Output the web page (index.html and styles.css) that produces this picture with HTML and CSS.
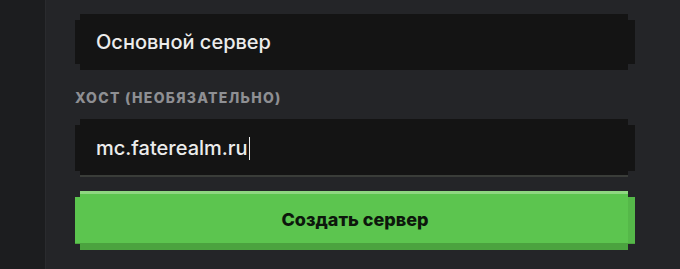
FILE: index.html
```html
<!DOCTYPE html>
<html lang="ru">
<head>
    <meta charset="UTF-8">
    <meta name="viewport" content="width=device-width, initial-scale=1.0">
    <title>Создать сервер</title>
    <link rel="stylesheet" href="styles.css">
</head>
<body>
    <div class="sidebar"></div>
    <div class="panel">
        <form class="server-form">
            <div class="field">
                <div class="pixel-input">Основной сервер</div>
            </div>
            <label class="field-label">Хост (необязательно)</label>
            <div class="field">
                <div class="pixel-input focused">mc.faterealm.ru<span class="caret"></span></div>
            </div>
            <button type="button" class="pixel-button">Создать сервер</button>
        </form>
    </div>
</body>
</html>
```

FILE: styles.css
```css
html, body {
    margin: 0;
    height: 100%;
    overflow: hidden;
}
body {
    display: flex;
    background-color: #1c1d1f;
    font-family: Inter, "Noto Sans", sans-serif;
}
.sidebar {
    width: 45px;
    flex-shrink: 0;
    border-right: 1px solid #2a2b2e;
}
.panel {
    flex: 1;
    background-color: #242528;
    padding: 14px 0 0 29px;
}
.server-form {
    width: 560px;
    display: flex;
    flex-direction: column;
}
/* notched "pixel" corners */
.pixel-input,
.pixel-button {
    clip-path: polygon(5px 0, calc(100% - 7px) 0, calc(100% - 7px) 6px, 100% 6px,
        100% calc(100% - 6px), calc(100% - 7px) calc(100% - 6px), calc(100% - 7px) 100%,
        5px 100%, 5px calc(100% - 6px), 0 calc(100% - 6px), 0 6px, 5px 6px);
}
.pixel-input {
    height: 56px;
    box-sizing: border-box;
    padding-left: 21px;
    display: flex;
    align-items: center;
    background-color: #141414;
    color: #ececec;
    font-size: 20px;
    font-weight: 500;
}
.pixel-input.focused {
    height: 58px;
    box-shadow: inset 0 -2px 0 #3a3d39;
}
.caret {
    display: inline-block;
    width: 1px;
    height: 23px;
    margin-left: 1px;
    background-color: #ececec;
}
.field-label {
    margin: 19px 0 13px;
    color: #8e8f93;
    font-size: 14px;
    font-weight: 800;
    letter-spacing: 1.3px;
    text-transform: uppercase;
}
.pixel-button {
    margin-top: 14px;
    height: 59px;
    border: none;
    background-color: #5cc54f;
    box-shadow: inset 0 3px 0 #8fd781, inset 0 -7px 0 #4ba33f, inset -7px 0 0 #55b849;
    color: #0d170c;
    font-family: Inter, "Noto Sans", sans-serif;
    font-size: 18px;
    font-weight: 800;
    padding-bottom: 4px;
    cursor: pointer;
}
```
